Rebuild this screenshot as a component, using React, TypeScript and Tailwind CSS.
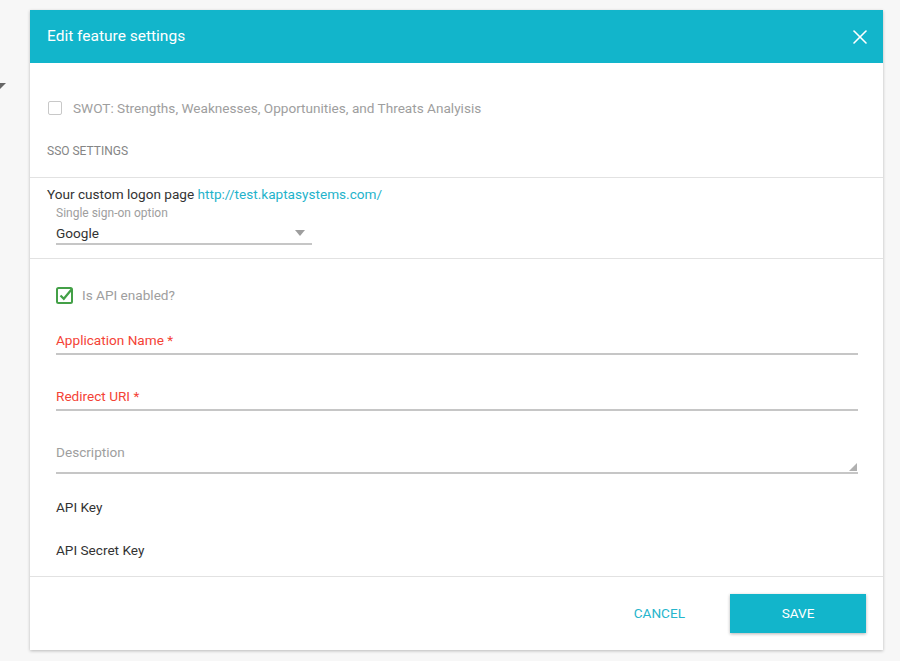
import { X } from "lucide-react";

function Field({ label, required, tall }: { label: string; required?: boolean; tall?: boolean }) {
  return (
    <div
      className={`relative border-b-2 border-[#c6c6c6] ${tall ? "h-[33px]" : "h-[26px]"}`}
    >
      <div className={`text-[13.6px] leading-[22px] ${required ? "text-[#f44336]" : "text-[#9e9e9e]"}`}>
        {label}
        {required && " *"}
      </div>
      {tall && (
        <svg className="absolute right-[1px] bottom-[1px]" width="8" height="8" viewBox="0 0 8 8">
          <polygon points="8,0 8,8 0,8" fill="#b0b0b0" />
        </svg>
      )}
    </div>
  );
}

export default function App() {
  return (
    <div
      className="relative min-h-screen bg-[#f7f7f7] pt-[10px] pl-[30px] text-[#333]"
      style={{ fontFamily: "Roboto, 'Liberation Sans', sans-serif" }}
    >
      {/* leftover of the page behind the overlay */}
      <svg className="absolute left-0 top-[83px]" width="6" height="6" viewBox="0 0 6 6">
        <polygon points="0,0 6,0 0,6" fill="#666" />
      </svg>

      <div className="w-[853px] bg-white shadow-[0_1px_3px_rgba(0,0,0,0.25)]">
        {/* Header */}
        <div className="h-[53px] bg-[#12b5cb] flex items-center justify-between pl-[17px] pr-[11px]">
          <h1 className="text-white text-[15.5px] font-normal">Edit feature settings</h1>
          <X size={24} strokeWidth={1.6} className="text-white" />
        </div>

        {/* Features */}
        <div className="pl-[17px] pt-[35px] pb-[18px] border-b border-[#e2e2e2]">
          <label className="flex items-center h-[20px] gap-[11px]">
            <span className="ml-[1px] w-[14px] h-[14px] rounded-[2px] border border-[#c8c8c8] bg-white" />
            <span className="text-[13.6px] text-[#9e9e9e]">
              SWOT: Strengths, Weaknesses, Opportunities, and Threats Analyisis
            </span>
          </label>
          <div className="mt-[25px] text-[12px] leading-[16px] text-[#858585] uppercase">SSO settings</div>
        </div>

        {/* SSO */}
        <div className="pl-[17px] pt-[6px] pb-[13px] border-b border-[#e2e2e2]">
          <div className="text-[13.6px] leading-[20px] text-[#333]">
            Your custom logon page <span className="text-[#1fb3cb]">http://test.kaptasystems.com/</span>
          </div>
          <div className="ml-[9px] mt-[1px] w-[256px]">
            <div className="text-[12px] leading-[16px] text-[#9e9e9e]">Single sign-on option</div>
            <div className="mt-[1px] flex items-center justify-between border-b-2 border-[#c6c6c6] h-[23px] pr-[7px]">
              <span className="text-[13.6px] leading-[20px] text-[#333]">Google</span>
              <svg width="10" height="6" viewBox="0 0 10 6">
                <polygon points="0,0 10,0 5,6" fill="#9e9e9e" />
              </svg>
            </div>
          </div>
        </div>

        {/* API */}
        <div className="pl-[26px] pr-[25px] pt-[26px] h-[318px] border-b border-[#e2e2e2]">
          <label className="flex items-center h-[20px] gap-[8px]">
            <svg width="18" height="18" viewBox="0 0 18 18">
              <rect x="1" y="2" width="15" height="15" rx="1.5" fill="none" stroke="#43a047" strokeWidth="2" />
              <path d="M4.5 9.5 L7.8 12.8 L15.5 3.5" fill="none" stroke="#43a047" strokeWidth="2.2" />
            </svg>
            <span className="text-[13.6px] text-[#9e9e9e]">Is API enabled?</span>
          </label>
          <div className="mt-[24px]">
            <Field label="Application Name" required />
          </div>
          <div className="mt-[30px]">
            <Field label="Redirect URI" required />
          </div>
          <div className="mt-[30px]">
            <Field label="Description" tall />
          </div>
          <div className="mt-[23px] text-[13.6px] leading-[20px] text-[#333]">API Key</div>
          <div className="mt-[23px] text-[13.6px] leading-[20px] text-[#333]">API Secret Key</div>
        </div>

        {/* Footer */}
        <div className="flex items-center justify-end gap-[29px] pt-[17px] pb-[17px] pr-[17px]">
          <button className="px-[16px] h-[39px] text-[13.6px] text-[#26b5cc] uppercase">Cancel</button>
          <button className="w-[136px] h-[39px] bg-[#12b5cb] text-white text-[13.6px] uppercase shadow-[0_1px_3px_rgba(0,0,0,0.3)]">
            Save
          </button>
        </div>
      </div>
    </div>
  );
}
